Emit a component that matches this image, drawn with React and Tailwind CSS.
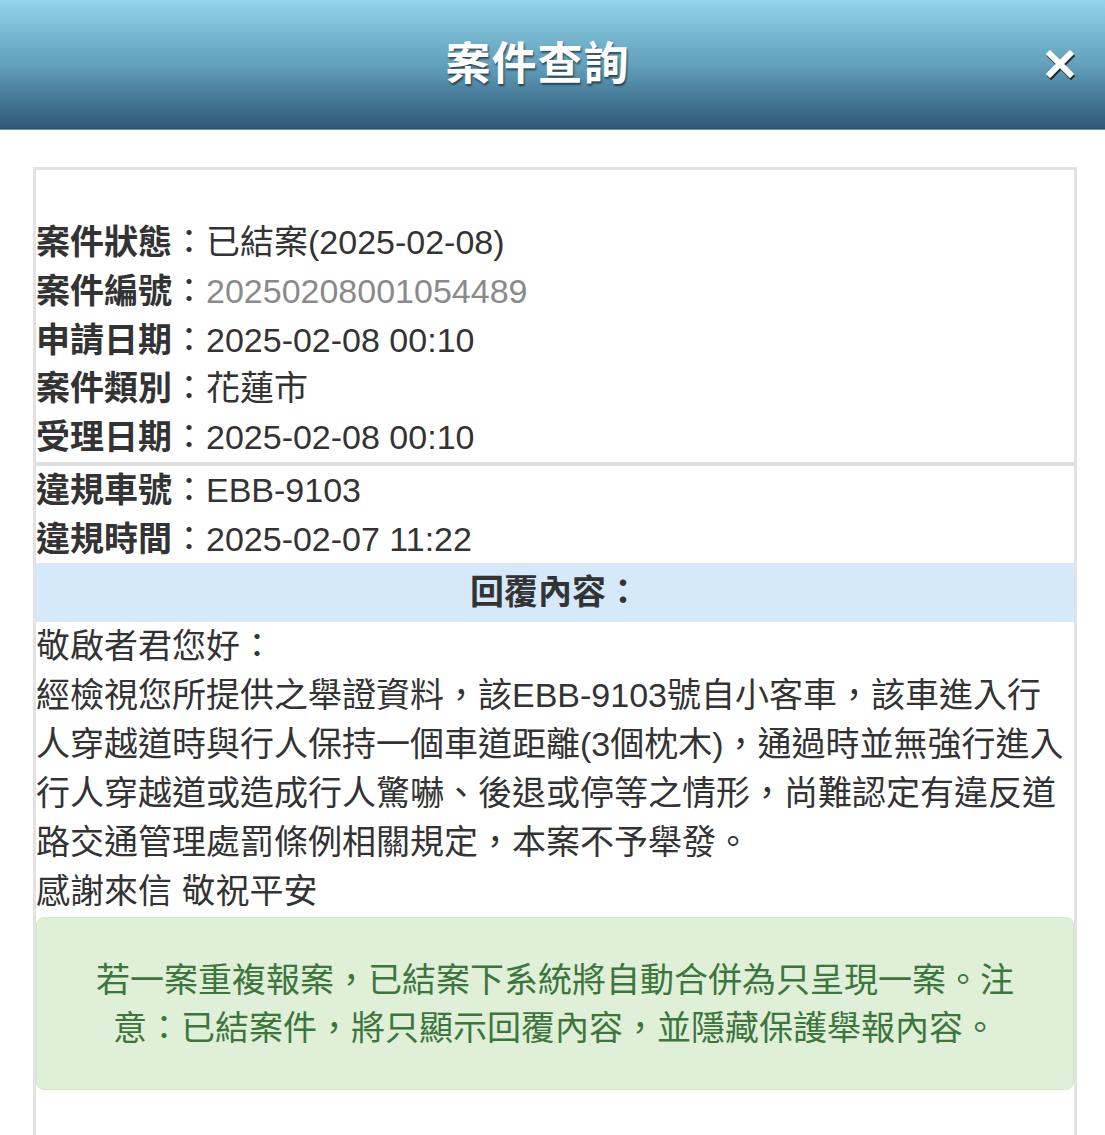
import React from "react";

const font = { fontFamily: '"Liberation Sans", "Noto Sans CJK TC", sans-serif' };

function Row({ label, value, gray }) {
  return (
    <div className="flex whitespace-nowrap text-[34px] leading-[48.75px] text-[#333]">
      <span className="font-bold">{label}</span>
      <span>：</span>
      <span className={gray ? "text-[#8a8a8a]" : ""}>{value}</span>
    </div>
  );
}

export default function App() {
  return (
    <div className="w-[1105px] h-[1135px] overflow-hidden bg-white" style={font}>
      <div className="relative h-[130px] bg-gradient-to-b from-[#93d4ea] via-[#62a0bb] to-[#2e5877] flex items-center justify-center pr-[30px] border-b border-[#6f8fa3]">
        <h1 className="text-[45px] font-bold text-white tracking-[1px] [text-shadow:1px_2px_2px_rgba(0,0,0,0.55)]">案件查詢</h1>
        <svg className="absolute left-[1046px] top-[50px]" width="30" height="30" viewBox="0 0 30 30">
          <g stroke="#000" strokeWidth="6" strokeLinecap="square" transform="translate(1,2)" opacity="0.7">
            <line x1="4" y1="4" x2="24" y2="24" />
            <line x1="24" y1="4" x2="4" y2="24" />
          </g>
          <g stroke="#fff" strokeWidth="6" strokeLinecap="square">
            <line x1="4" y1="4" x2="24" y2="24" />
            <line x1="24" y1="4" x2="4" y2="24" />
          </g>
        </svg>
      </div>
      <div className="mt-[37px] ml-[33px] w-[1044px] h-[1000px] border-[3px] border-b-0 border-[#e2e2e2]">
        <div className="pt-[48px] border-b-4 border-[#dedede]">
          <Row label="案件狀態" value="已結案(2025-02-08)" />
          <Row label="案件編號" value="20250208001054489" gray />
          <Row label="申請日期" value="2025-02-08 00:10" />
          <Row label="案件類別" value="花蓮市" />
          <Row label="受理日期" value="2025-02-08 00:10" />
        </div>
        <Row label="違規車號" value="EBB-9103" />
        <Row label="違規時間" value="2025-02-07 11:22" />
        <div className="h-[59px] bg-[#d5e9fa] flex items-center justify-center text-[34px] font-bold text-[#333]">
          回覆內容：
        </div>
        <div className="text-[34px] leading-[49px] text-[#333] whitespace-nowrap">
          <div>敬啟者君您好：</div>
          <div>經檢視您所提供之舉證資料，該EBB-9103號自小客車，該車進入行</div>
          <div>人穿越道時與行人保持一個車道距離(3個枕木)，通過時並無強行進入</div>
          <div>行人穿越道或造成行人驚嚇、後退或停等之情形，尚難認定有違反道</div>
          <div>路交通管理處罰條例相關規定，本案不予舉發。</div>
          <div>感謝來信 敬祝平安</div>
        </div>
        <div className="mt-[1px] h-[173px] rounded-[8px] border border-[#d3e8c9] bg-[#dfefd8] flex flex-col items-center justify-center text-[34px] leading-[48px] text-[#3c763d] whitespace-nowrap">
          <div>若一案重複報案，已結案下系統將自動合併為只呈現一案。注</div>
          <div>意：已結案件，將只顯示回覆內容，並隱藏保護舉報內容。</div>
        </div>
      </div>
    </div>
  );
}
